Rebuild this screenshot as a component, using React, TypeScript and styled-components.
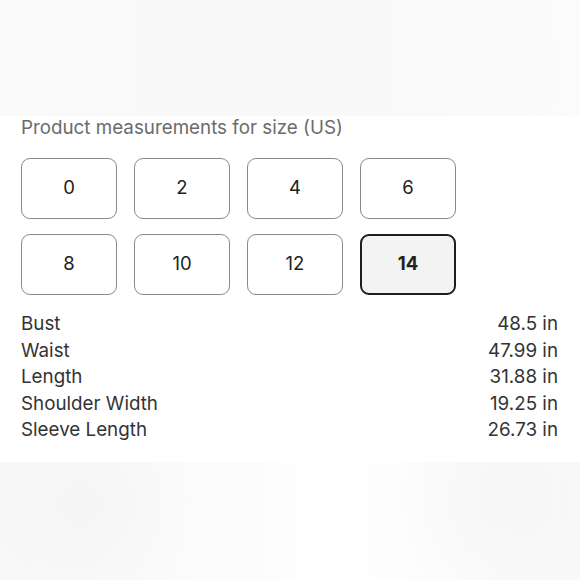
import React from 'react';
import styled, { createGlobalStyle } from 'styled-components';

const GlobalStyle = createGlobalStyle`
  html, body {
    margin: 0;
    padding: 0;
    background: #ffffff;
  }
  body {
    font-family: Inter, "Liberation Sans", Arial, sans-serif;
  }
`;

const Page = styled.div`
  width: 580px;
  height: 580px;
  display: flex;
  flex-direction: column;
  overflow: hidden;
`;

const TopBand = styled.div`
  height: 116px;
  background:
    radial-gradient(ellipse 300px 90px at 50% 60%, #f9f9f9 0%, rgba(249, 249, 249, 0) 100%),
    linear-gradient(90deg, #fafafa 0%, #f8f8f8 50%, #fbfbfb 100%);
`;

const Panel = styled.div`
  height: 346px;
  background: #ffffff;
  padding: 0 22px 0 21px;
  box-sizing: border-box;
`;

const Title = styled.div`
  font-size: 18.8px;
  line-height: 24px;
  color: #6b6b6b;
`;

const SizeGrid = styled.div`
  display: grid;
  grid-template-columns: repeat(4, 96px);
  column-gap: 17px;
  row-gap: 15px;
  margin-top: 18px;
`;

const SizeButton = styled.div<{ $active?: boolean }>`
  height: 61px;
  box-sizing: border-box;
  display: flex;
  align-items: center;
  justify-content: center;
  padding-bottom: 3px;
  border-radius: 9px;
  border: ${p => (p.$active ? '2.5px solid #1e1e1e' : '1.3px solid #8a8a8a')};
  background: ${p => (p.$active ? '#f3f3f3' : '#ffffff')};
  font-size: 18.5px;
  font-weight: ${p => (p.$active ? 700 : 400)};
  color: #222;
`;

const Measurements = styled.div`
  margin-top: 16px;
  display: flex;
  flex-direction: column;
`;

const Row = styled.div`
  display: flex;
  justify-content: space-between;
  font-size: 18.8px;
  line-height: 26.6px;
  color: #333333;
`;

const BottomBand = styled.div`
  flex: 1;
  background:
    radial-gradient(circle 110px at 14% 35%, #f5f5f5 0%, rgba(245, 245, 245, 0) 100%),
    radial-gradient(circle 120px at 88% 30%, #f6f6f6 0%, rgba(246, 246, 246, 0) 100%),
    linear-gradient(90deg, #f8f8f8 0%, #fcfcfc 45%, #ffffff 55%, #f9f9f9 100%);
`;

const sizes = ['0', '2', '4', '6', '8', '10', '12', '14'];

const rows: [string, string][] = [
  ['Bust', '48.5 in'],
  ['Waist', '47.99 in'],
  ['Length', '31.88 in'],
  ['Shoulder Width', '19.25 in'],
  ['Sleeve Length', '26.73 in'],
];

export default function App() {
  return (
    <Page>
      <GlobalStyle />
      <TopBand />
      <Panel>
        <Title>Product measurements for size (US)</Title>
        <SizeGrid>
          {sizes.map(s => (
            <SizeButton key={s} $active={s === '14'}>
              {s}
            </SizeButton>
          ))}
        </SizeGrid>
        <Measurements>
          {rows.map(([label, value]) => (
            <Row key={label}>
              <span>{label}</span>
              <span>{value}</span>
            </Row>
          ))}
        </Measurements>
      </Panel>
      <BottomBand />
    </Page>
  );
}
